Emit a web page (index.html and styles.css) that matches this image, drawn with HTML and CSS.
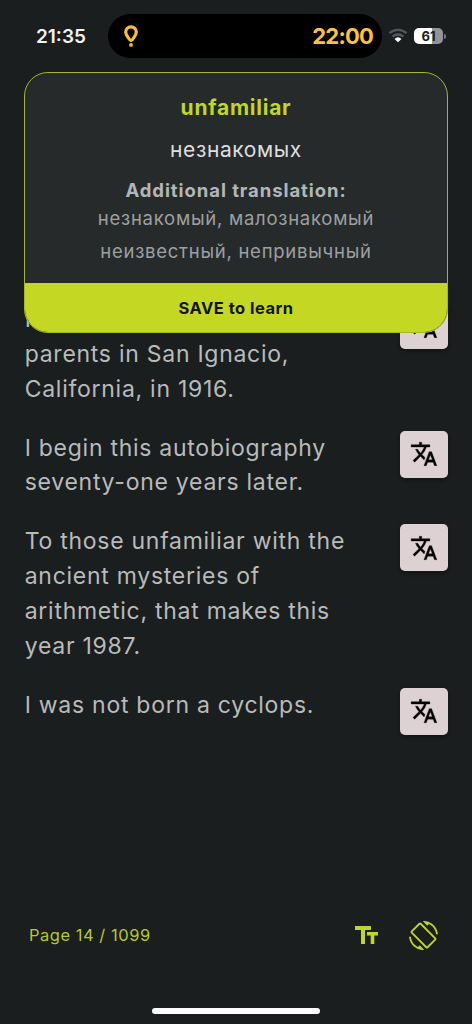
FILE: index.html
```html
<!DOCTYPE html>
<html lang="en">
<head>
<meta charset="utf-8">
<title>Reader</title>
<link rel="stylesheet" href="styles.css">
</head>
<body>
<svg class="defs" width="0" height="0" aria-hidden="true">
  <symbol id="translate" viewBox="0 0 24 24"><path d="M12.87 15.07l-2.54-2.51.03-.03A17.52 17.52 0 0014.07 6H17V4h-7V2H8v2H1v1.99h11.17C11.5 7.92 10.44 9.75 9 11.35 8.07 10.32 7.3 9.19 6.69 8h-2c.73 1.63 1.73 3.17 2.98 4.56l-5.09 5.02L4 19l5-5 3.11 3.11.76-2.04zM18.5 10h-2L12 22h2l1.12-3h4.75L21 22h2l-4.5-12zm-2.62 7l1.62-4.33L19.12 17h-3.24z"/></symbol>
</svg>
<div class="screen">
  <header class="status">
    <span class="clock">21:35</span>
    <div class="island">
      <svg class="pin" width="16" height="24" viewBox="0 0 16 24"><path d="M8 2.900C4.900 2.900 2.700 5.200 2.700 8c0 2.200 1.300 3.900 2.500 5.600.9 1.300 1.700 3.100 2.800 3.100s1.900-1.800 2.800-3.100c1.200-1.700 2.500-3.400 2.500-5.600 0-2.800-2.200-5.100-5.300-5.100z"/><circle cx="8" cy="20.900" r="1.900"/></svg>
      <span class="timer">22:00</span>
    </div>
    <svg class="wifi" width="20" height="16" viewBox="0 0 20 16"><path class="dim" d="M1.500 5.200a12.500 12.500 0 0 1 17 0M4.600 8.600a8 8 0 0 1 10.800 0"/><path class="lit" d="M10 14.200L6.600 10.900a5 5 0 0 1 6.800 0z"/></svg>
    <div class="battery"><span class="level">61</span></div>
    <i class="nub"></i>
  </header>

  <main class="reader">
    <article class="row">
      <p class="text">I was born to<br>parents in San Ignacio, California, in 1916.</p>
      <button class="tr"><svg width="28" height="28"><use href="#translate"/></svg></button>
    </article>
    <article class="row">
      <p class="text">I begin this autobiography seventy-one years later.</p>
      <button class="tr"><svg width="28" height="28"><use href="#translate"/></svg></button>
    </article>
    <article class="row">
      <p class="text">To those unfamiliar with the ancient mysteries of arithmetic, that makes this year 1987.</p>
      <button class="tr"><svg width="28" height="28"><use href="#translate"/></svg></button>
    </article>
    <article class="row">
      <p class="text">I was not born a cyclops.</p>
      <button class="tr"><svg width="28" height="28"><use href="#translate"/></svg></button>
    </article>
  </main>

  <section class="card">
    <div class="meaning">
      <h1 class="word">unfamiliar</h1>
      <p class="translation">незнакомых</p>
      <h2 class="more">Additional translation:</h2>
      <p class="variants">незнакомый, малознакомый<br>неизвестный, непривычный</p>
    </div>
    <button class="save">SAVE to learn</button>
  </section>

  <footer class="bar">
    <span class="page">Page 14 / 1099</span>
    <svg class="size" width="24" height="20" viewBox="0 0 24 20"><path d="M0 1h16v4H10v14H6V5H0zM12 7h11v3.500h-3.700V19h-3.600v-8.500H12z"/></svg>
    <svg class="rotate" width="29" height="29" viewBox="0 0 24 24"><path d="M16.480 2.520c3.270 1.550 5.610 4.720 5.970 8.480h1.500C23.440 4.840 18.290 0 12 0l-.66.03 3.810 3.810 1.330-1.320zm-6.250-.77c-.59-.59-1.540-.59-2.120 0L1.750 8.110c-.59.59-.59 1.540 0 2.120l12.020 12.020c.59.59 1.540.59 2.120 0l6.360-6.360c.59-.59.59-1.540 0-2.120L10.230 1.750zm4.600 19.440L2.810 9.170l6.360-6.360 12.020 12.020-6.360 6.360zm-7.310.29C4.250 19.940 1.910 16.760 1.550 13H.05C.56 19.160 5.710 24 12 24l.66-.03-3.810-3.810-1.330 1.320z"/></svg>
  </footer>
  <div class="home"></div>
</div>
</body>
</html>
```
FILE: styles.css
```css
* { box-sizing: border-box; }
body { margin: 0; background: #1b1e1f; font-family: Inter, "Noto Sans", sans-serif; }
h1, h2, p { margin: 0; }
button { border: 0; padding: 0; font-family: inherit; }
svg { display: block; }
.defs { position: absolute; }
.screen { position: relative; width: 472px; height: 1024px; overflow: hidden; display: flex; flex-direction: column; }

.status { height: 72px; padding: 14px 0 14px 36px; display: flex; align-items: center; flex: none; }
.clock { width: 72px; color: #f1f2f2; font-size: 19px; font-weight: 600; }
.island { width: 274px; height: 44px; border-radius: 22px; background: #000; display: flex; align-items: center; justify-content: space-between; padding: 0 9px 0 15px; }
.pin path { fill: none; stroke: #f9bf3b; stroke-width: 3.200; }
.pin circle { fill: #f9bf3b; }
.timer { color: #fbc23d; font-size: 22px; font-weight: 700; letter-spacing: -0.800px; }
.wifi { margin-left: 6px; }
.wifi .dim { fill: none; stroke: #55585a; stroke-width: 2.400; }
.wifi .lit { fill: #fff; }
.battery { margin-left: 6px; width: 29px; height: 16px; border-radius: 5px; background: linear-gradient(90deg, #fff 62%, #929495 62%); text-align: center; line-height: 16px; }
.level { display: block; color: #1b1e1f; font-size: 13px; font-weight: 700; }
.nub { width: 2px; height: 5px; margin-left: 1px; background: #777a7b; border-radius: 0 2px 2px 0; }

.reader { margin-top: 230px; padding: 0 24px; display: flex; flex-direction: column; gap: 24.200px; }
.row { display: flex; align-items: flex-start; justify-content: space-between; }
.text { width: 340px; padding-left: 0.700px; color: #b9bbbb; font-size: 23px; line-height: 34.800px; letter-spacing: 0.730px; }
.tr { width: 48px; height: 47px; border-radius: 5px; background: #ded1d3; display: grid; place-items: center; box-shadow: 0 2px 4px rgba(0,0,0,.4); }
.tr svg { stroke: #000; stroke-width: 0.300px; }

.card { position: absolute; left: 24px; top: 72px; width: 424px; height: 261px; border: 1.500px solid #a4b827; border-radius: 24px; background: #262a2b; overflow: hidden; display: flex; flex-direction: column; text-align: center; }
.meaning { flex: 1; padding-top: 21px; }
.word { color: #c0d725; font-size: 21px; line-height: 28px; font-weight: 700; letter-spacing: 0.750px; }
.translation { margin-top: 14px; color: #dededf; font-size: 21px; line-height: 28px; letter-spacing: 0.600px; }
.more { margin-top: 13px; color: #b3b6b6; font-size: 18.500px; line-height: 26px; font-weight: 700; letter-spacing: 0.930px; }
.variants { margin-top: -1px; color: #9da0a1; font-size: 18.500px; line-height: 32.500px; letter-spacing: 0.740px; }
.save { height: 49px; flex: none; background: #c4d823; color: #12150a; font-size: 16.500px; font-weight: 700; letter-spacing: 0.480px; }

.bar { margin-top: auto; height: 60px; padding: 0 34px 0 29px; display: flex; align-items: center; flex: none; color: #b5ca24; }
.page { margin-right: auto; font-size: 16.500px; letter-spacing: 0.520px; }
.size, .rotate { fill: #c0d52a; }
.rotate { margin-left: 30px; }
.home { flex: none; width: 168px; height: 6px; margin: 43px auto 10px; border-radius: 3px; background: #fff; }
```
